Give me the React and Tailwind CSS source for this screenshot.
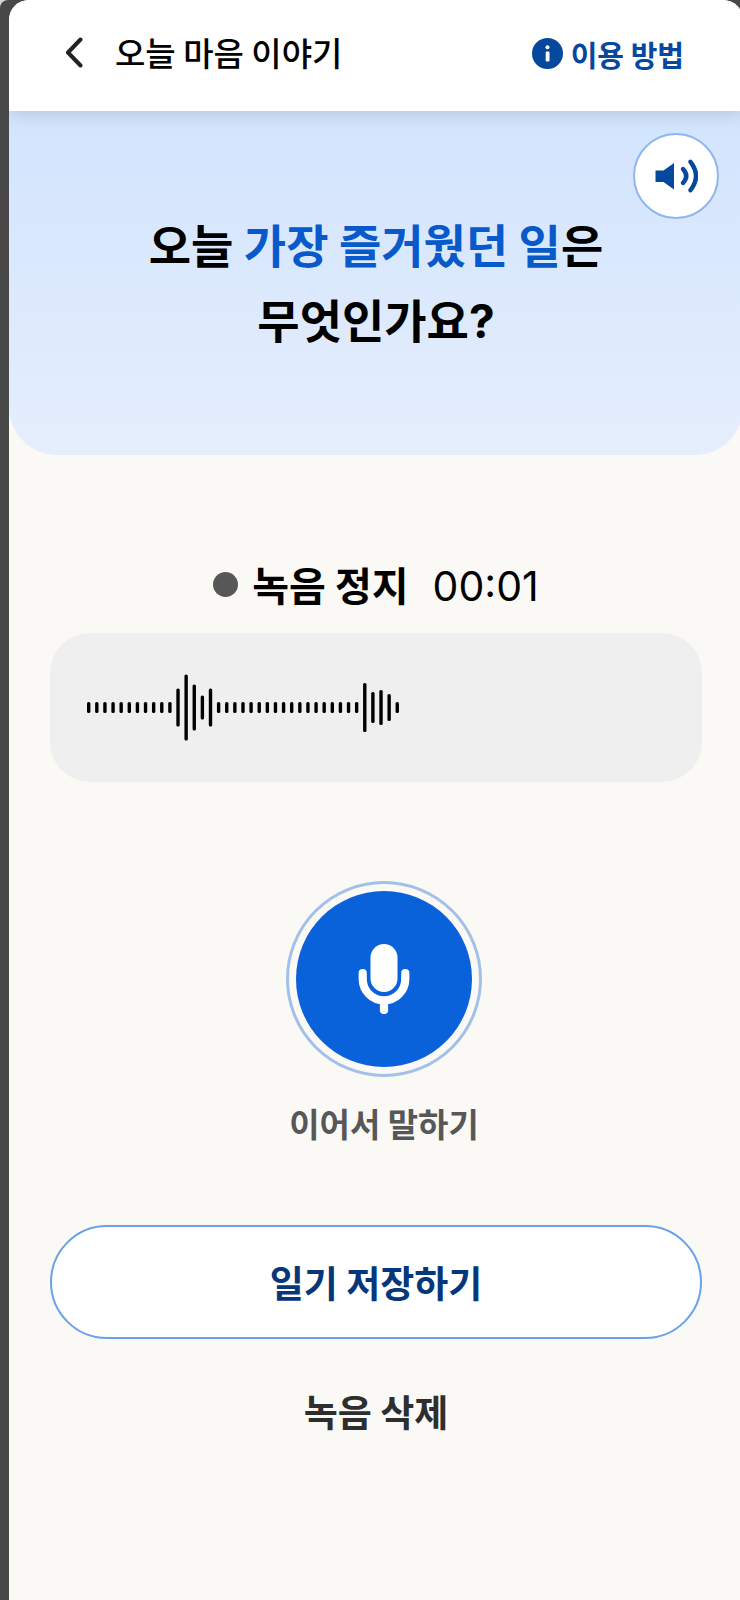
import React, { useState } from 'react';

// Bar heights of the recorded wave form
const WAVE_BARS = [
  11, 11, 11, 11, 11, 11, 11, 11, 11, 11, 11,
  38, 66, 46, 24, 38,
  11, 11, 11, 11, 11, 11, 11, 11, 11, 11, 11, 11, 11, 11, 11, 11, 11, 11,
  49, 31, 35, 27, 11,
];

const BAR_STEP = 8.12;

const BackIcon = () => (
  <svg width="20" height="32" viewBox="0 0 20 32" fill="none" aria-hidden="true">
    <path d="M17.5 3.5 L5 16.5 L17.5 29.5" stroke="#222222" strokeWidth="4" strokeLinecap="round" strokeLinejoin="round" />
  </svg>
);

const InfoIcon = () => (
  <svg width="31" height="31" viewBox="0 0 31 31" aria-hidden="true">
    <circle cx="15.5" cy="15.5" r="15.5" fill="#05489d" />
    <circle cx="15.5" cy="9.3" r="2" fill="#ffffff" />
    <rect x="13.7" y="13.4" width="3.8" height="10" rx="1" fill="#ffffff" />
  </svg>
);

const SpeakerIcon = () => (
  <svg width="44" height="34" viewBox="0 0 44 34" fill="none" aria-hidden="true">
    <path d="M1.5 11.5 H9.5 L20 4 V30.5 L9.5 23 H1.5 Z" fill="#05489d" />
    <path d="M29 10 Q35.5 17 29 24" stroke="#05489d" strokeWidth="4.4" strokeLinecap="round" />
    <path d="M36.5 2.8 Q47.5 17 36.5 31.2" stroke="#05489d" strokeWidth="4.4" strokeLinecap="round" />
  </svg>
);

const MicIcon = () => (
  <svg width="52" height="70" viewBox="0 0 52 70" fill="none" aria-hidden="true">
    <rect x="12.5" y="0" width="27" height="48" rx="13.5" fill="#ffffff" />
    <path d="M4.7 29 V35 A21.3 21.3 0 0 0 47.3 35 V29" stroke="#ffffff" strokeWidth="8.2" strokeLinecap="round" />
    <path d="M26 58 V66" stroke="#ffffff" strokeWidth="8.2" strokeLinecap="round" />
  </svg>
);

const WaveForm = ({ bars }) => (
  <svg width={bars.length * BAR_STEP} height="68" aria-hidden="true">
    {bars.map((height, index) => (
      <rect
        key={index}
        x={index * BAR_STEP + 1}
        y={33.5 - height / 2}
        width="3.4"
        height={height}
        rx="1.5"
        fill="#000000"
      />
    ))}
  </svg>
);

const Header = () => (
  <header className="relative z-10 flex h-[111px] items-center bg-white pr-[59px] pb-2 pl-[54px] shadow-[0_4px_16px_rgba(0,0,0,0.12)]">
    <button type="button" aria-label="뒤로" className="cursor-pointer">
      <BackIcon />
    </button>
    <h1 className="ml-8 grow text-[33px] leading-[48px] font-medium text-black">오늘 마음 이야기</h1>
    <button type="button" className="mt-1 flex cursor-pointer items-center gap-2 text-[29px] leading-[48px] font-bold text-[#05489d]">
      <InfoIcon />
      이용 방법
    </button>
  </header>
);

const Question = () => (
  <section className="relative rounded-b-[48px] bg-linear-to-b from-[#d2e4fe] to-[#e5eefc] pt-[95px] pb-[99px]">
    <h2 className="text-center text-[46px] leading-[75px] font-bold text-black">
      오늘 <span className="text-[#0859c9]">가장 즐거웠던 일</span>은
      <br />
      무엇인가요<span className="leading-none font-['Inter',sans-serif]">?</span>
    </h2>
    <button
      type="button"
      aria-label="질문 듣기"
      className="absolute top-[22px] right-6 flex size-[86px] cursor-pointer items-center justify-center rounded-full border-2 border-[#8fb5f0] bg-white"
    >
      <SpeakerIcon />
    </button>
  </section>
);

export default function App() {
  const [recording, setRecording] = useState(false);

  return (
    <div className="overflow-hidden bg-[#d8d8d8] font-['Noto_Sans_CJK_KR',sans-serif]">
      <div className="-mr-[3px] rounded-tl-lg bg-[#484848] pl-[9px]">
        <div className="min-h-screen overflow-hidden rounded-t-[20px] bg-[#faf9f6]">
          <Header />
          <main>
            <Question />

            <div className="flex flex-col items-stretch pt-[99px] pr-[41px] pb-16 pl-[41px]">
              <div className="flex items-center justify-center text-[40px] leading-[60px] text-black">
                <span className="mr-[14px] size-[25px] rounded-full bg-[#575757]" />
                <strong className="mr-6 font-bold">녹음 정지</strong>
                <time className="pt-1 text-[41px] leading-[56px] font-['Inter',sans-serif]">00:01</time>
              </div>

              <div className="mt-[19px] flex h-[149px] items-center rounded-[40px] bg-[#efefef] pl-9">
                <WaveForm bars={WAVE_BARS} />
              </div>

              <div className="mt-[99px] flex flex-col items-center pl-4">
                <button
                  type="button"
                  aria-labelledby="mic-label"
                  aria-pressed={recording}
                  onClick={() => setRecording(!recording)}
                  className="flex size-[196px] cursor-pointer items-center justify-center rounded-full border-3 border-[#a3c0e8] p-[7px]"
                >
                  <span className="flex size-full items-center justify-center rounded-full bg-[#0a62da]">
                    <MicIcon />
                  </span>
                </button>
                <span id="mic-label" className="mt-[22px] text-[33px] leading-[48px] font-bold text-[#575757]">
                  이어서 말하기
                </span>
              </div>

              <button
                type="button"
                className="mt-[78px] h-[114px] cursor-pointer rounded-full border-2 border-[#6ba1e8] bg-white text-[37px] leading-[48px] font-bold text-[#06377b]"
              >
                일기 저장하기
              </button>
              <button
                type="button"
                className="mt-12 cursor-pointer self-center text-[37px] leading-[48px] font-bold text-[#2e2e2e]"
              >
                녹음 삭제
              </button>
            </div>
          </main>
        </div>
      </div>
    </div>
  );
}
